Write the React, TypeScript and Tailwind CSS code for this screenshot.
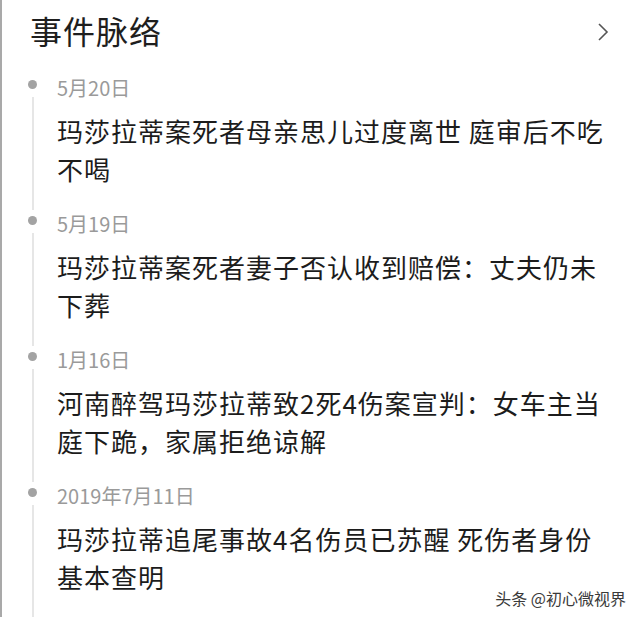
import React from "react";

const items = [
  { date: "5月20日", text: "玛莎拉蒂案死者母亲思儿过度离世 庭审后不吃不喝" },
  { date: "5月19日", text: "玛莎拉蒂案死者妻子否认收到赔偿：丈夫仍未下葬" },
  { date: "1月16日", text: "河南醉驾玛莎拉蒂致2死4伤案宣判：女车主当庭下跪，家属拒绝谅解" },
  { date: "2019年7月11日", text: "玛莎拉蒂追尾事故4名伤员已苏醒 死伤者身份基本查明" },
];

export default function App() {
  return (
    <div
      className="relative w-[640px] h-[617px] overflow-hidden bg-white border-l-[2px] border-[#a9a9a9]"
      style={{ fontFamily: '"Noto Sans CJK SC", "Noto Sans", sans-serif' }}
    >
      <div className="flex items-center justify-between pl-[28px] pr-[31px] pt-[14px] h-[46px]">
        <div className="text-[32px] leading-[32px] tracking-[1px] text-[#1e1e1e]">事件脉络</div>
        <svg width="12" height="20" viewBox="0 0 12 20" className="mt-[4px]">
          <polyline points="2,2 10,10 2,18" fill="none" stroke="#555" strokeWidth="1.6" strokeLinejoin="miter" />
        </svg>
      </div>
      <div className="mt-[28px] flex flex-col">
        {items.map((it, i) => (
          <div key={i} className="flex">
            <div className="w-[55px] pl-[26px] flex">
              <div className="w-[9px] flex flex-col items-center">
                <div className="mt-[6px] w-[9px] h-[9px] rounded-full bg-[#a3a3a3]" />
                <div
                  className={
                    i === items.length - 1
                      ? "mt-[8px] w-[2px] h-[200px] bg-[#e6e6e6]"
                      : "mt-[8px] w-[2px] flex-1 bg-[#e6e6e6]"
                  }
                />
              </div>
            </div>
            <div className="w-[560px] pb-[22px]">
              <div className="text-[20px] leading-[28px] text-[#9a9a9a]">{it.date}</div>
              <p className="mt-[10px] text-[26px] leading-[38px] tracking-[1px] text-[#1c1c1c]">
                <span>{it.text}</span>
              </p>
            </div>
          </div>
        ))}
      </div>
      <div
        className="absolute right-[14px] bottom-[9px] text-[16px] leading-[20px] text-[#3a3a3a]"
        style={{ textShadow: "0 0 2px #fff, 0 0 2px #fff" }}
      >
        头条 @初心微视界
      </div>
    </div>
  );
}
